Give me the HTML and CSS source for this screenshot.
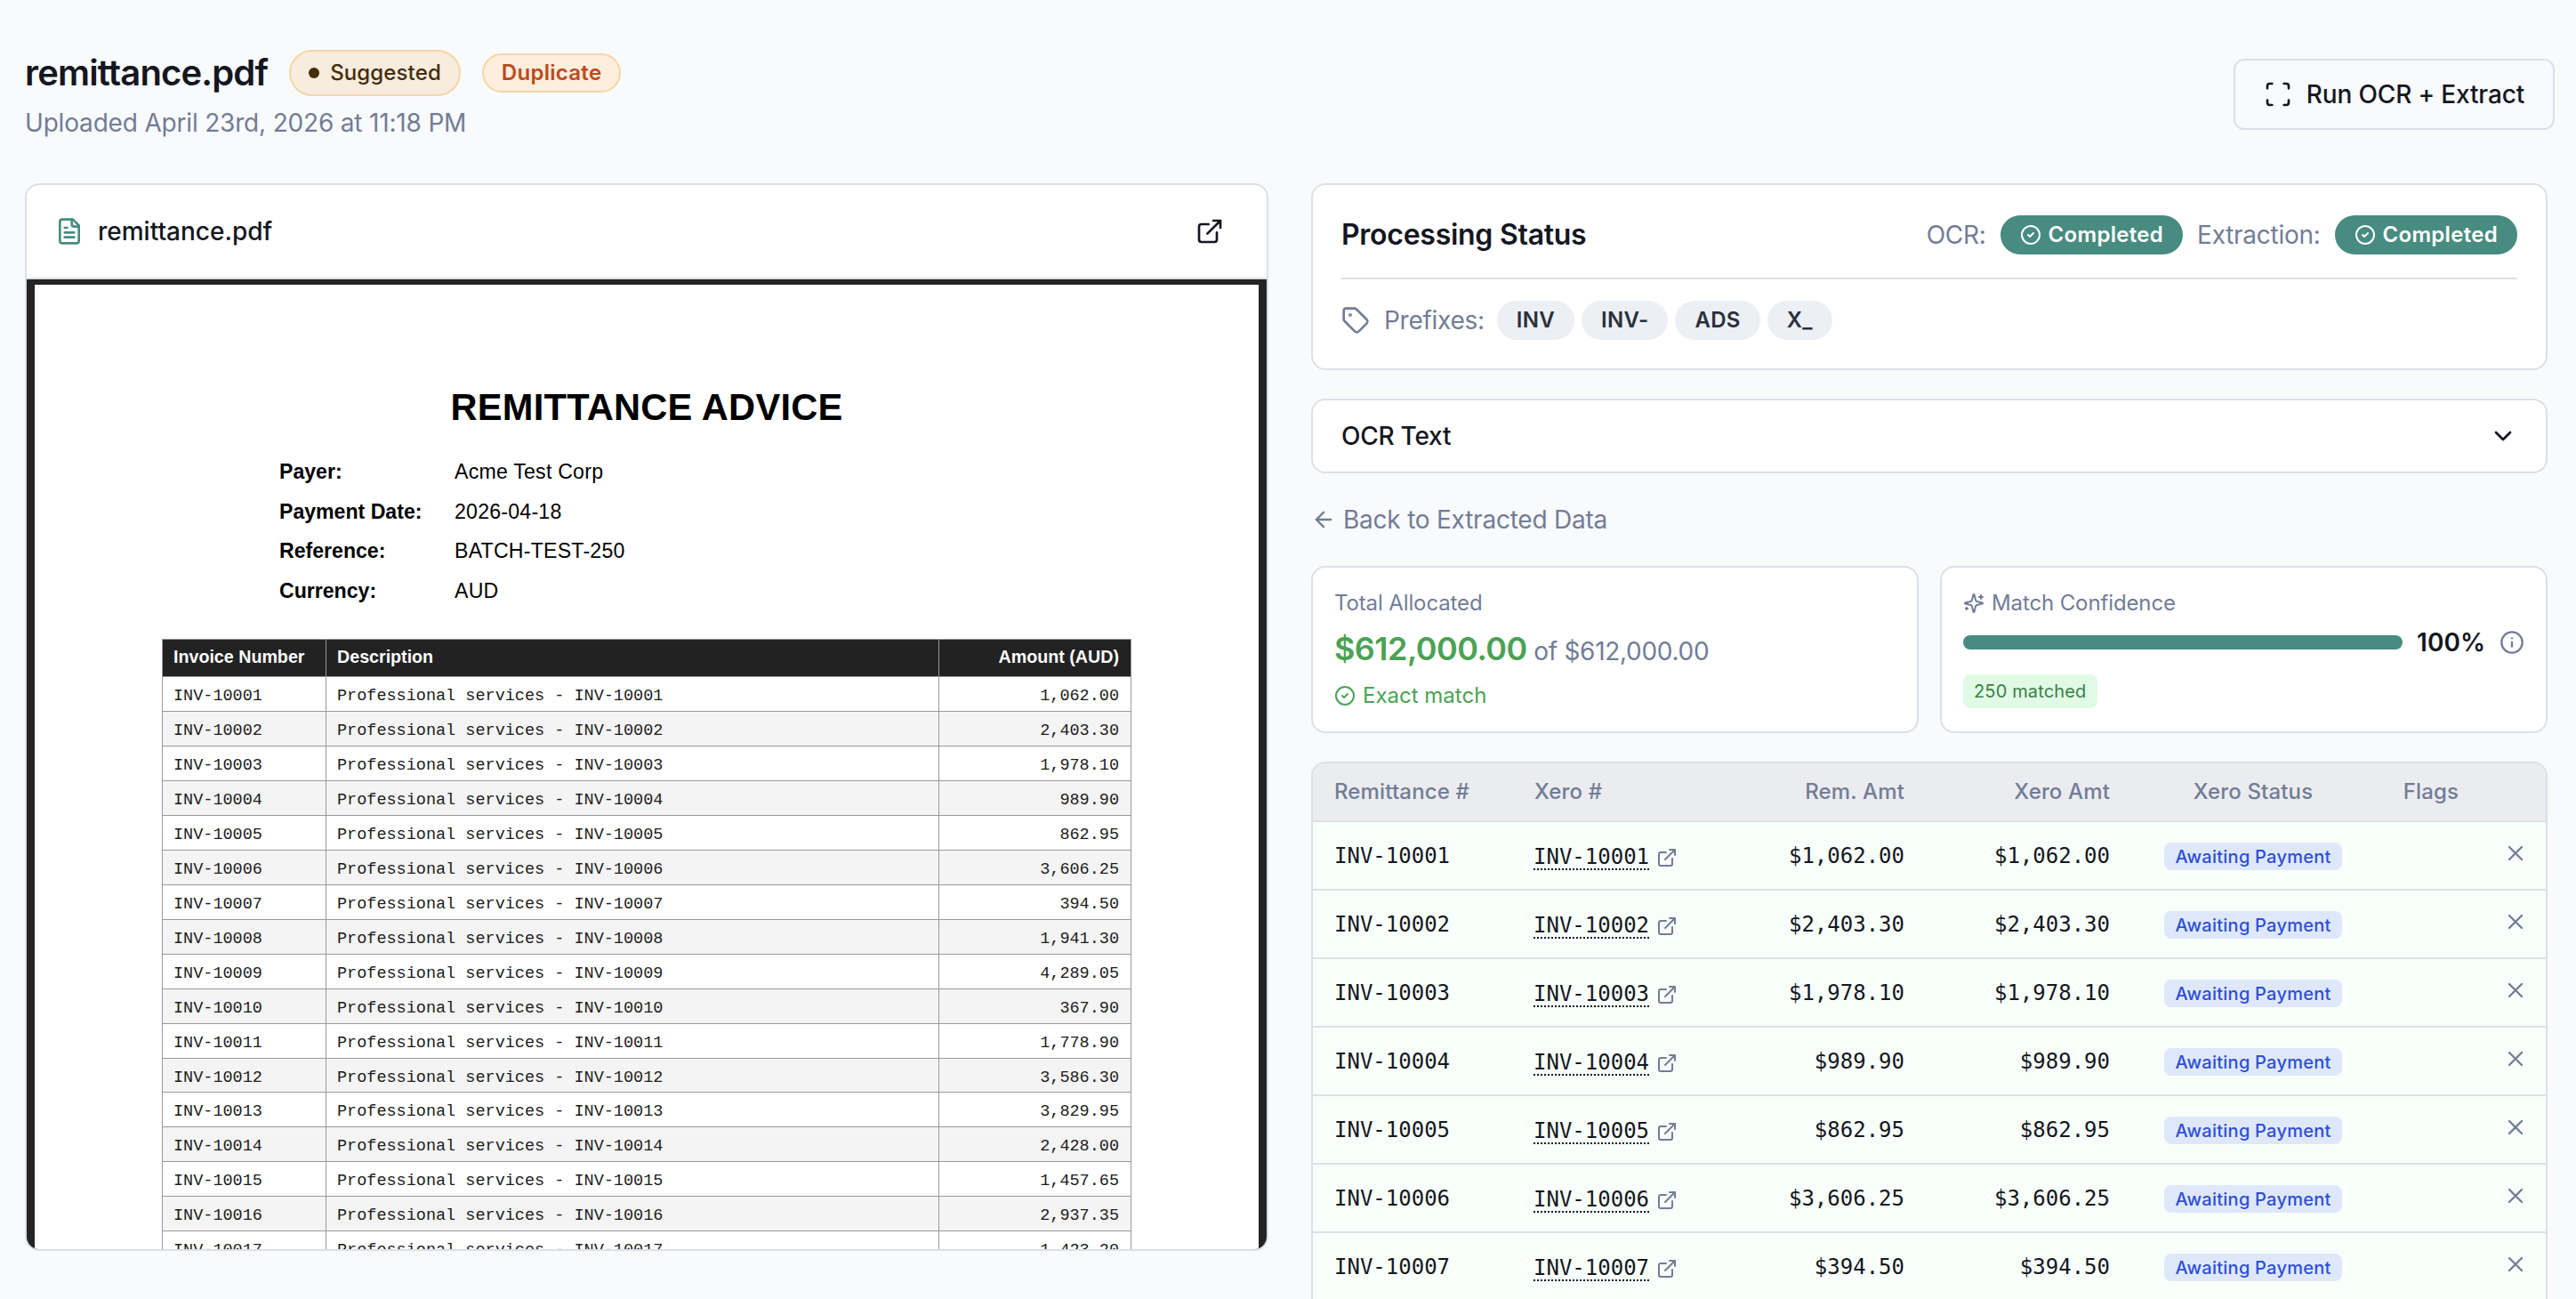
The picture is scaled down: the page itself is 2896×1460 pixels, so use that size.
FILE: index.html
```html
<!DOCTYPE html>
<html lang="en">

<head>
    <meta charset="UTF-8">
    <meta name="viewport" content="width=device-width, initial-scale=1.0">
    <title>remittance.pdf</title>
    <link rel="stylesheet" href="styles.css">
</head>

<body>
    <!--Icons-->
    <svg class="sprite">
        <symbol id="file" viewBox="0 0 24 24">
            <path d="M15 2H6a2 2 0 0 0-2 2v16a2 2 0 0 0 2 2h12a2 2 0 0 0 2-2V7Z" />
            <path d="M14 2v4a2 2 0 0 0 2 2h4M10 9H8M16 13H8M16 17H8" />
        </symbol>
        <symbol id="external" viewBox="0 0 24 24">
            <path d="M15 3h6v6M10 14 21 3M18 13v6a2 2 0 0 1-2 2H5a2 2 0 0 1-2-2V8a2 2 0 0 1 2-2h6" />
        </symbol>
        <symbol id="scan" viewBox="0 0 24 24">
            <path d="M3 7V5a2 2 0 0 1 2-2h2M17 3h2a2 2 0 0 1 2 2v2M21 17v2a2 2 0 0 1-2 2h-2M7 21H5a2 2 0 0 1-2-2v-2" />
        </symbol>
        <symbol id="check" viewBox="0 0 24 24">
            <circle cx="12" cy="12" r="10" />
            <path d="m9 12 2 2 4-4" />
        </symbol>
        <symbol id="tag" viewBox="0 0 24 24">
            <path d="M12.586 2.586A2 2 0 0 0 11.172 2H4a2 2 0 0 0-2 2v7.172a2 2 0 0 0 .586 1.414l8.704 8.704a2.426 2.426 0 0 0 3.42 0l6.58-6.58a2.426 2.426 0 0 0 0-3.42z" />
            <circle cx="7.5" cy="7.5" r=".5" fill="currentColor" />
        </symbol>
        <symbol id="chevron" viewBox="0 0 24 24">
            <path d="m6 9 6 6 6-6" />
        </symbol>
        <symbol id="arrow" viewBox="0 0 24 24">
            <path d="m12 19-7-7 7-7M19 12H5" />
        </symbol>
        <symbol id="sparkles" viewBox="0 0 24 24">
            <path d="M9.937 15.5A2 2 0 0 0 8.5 14.063l-6.135-1.582a.5.5 0 0 1 0-.962L8.5 9.936A2 2 0 0 0 9.937 8.5l1.582-6.135a.5.5 0 0 1 .963 0L14.063 8.5A2 2 0 0 0 15.5 9.937l6.135 1.581a.5.5 0 0 1 0 .964L15.5 14.063a2 2 0 0 0-1.437 1.437l-1.582 6.135a.5.5 0 0 1-.963 0z" />
            <path d="M20 3v4M22 5h-4M4 17v2M5 18H3" />
        </symbol>
        <symbol id="info" viewBox="0 0 24 24">
            <circle cx="12" cy="12" r="10" />
            <path d="M12 16v-4M12 8h.01" />
        </symbol>
        <symbol id="close" viewBox="0 0 24 24">
            <path d="M18 6 6 18M6 6l12 12" />
        </symbol>
    </svg>

    <!--Header-->
    <header class="header">
        <div>
            <div class="titleRow">
                <h1>remittance.pdf</h1>
                <span class="badge suggested"><i class="dot"></i>Suggested</span>
                <span class="badge duplicate">Duplicate</span>
            </div>
            <p class="uploaded">Uploaded April 23rd, 2026 at 11:18 PM</p>
        </div>
        <button class="runButton"><svg class="icon"><use href="#scan" /></svg>Run OCR + Extract</button>
    </header>

    <!--Main Body-->
    <main class="main">
        <section class="card viewer">
            <div class="viewerHead">
                <svg class="icon teal"><use href="#file" /></svg>
                <span class="viewerName">remittance.pdf</span>
                <svg class="icon"><use href="#external" /></svg>
            </div>
            <div class="viewerBody">
                <div class="page">
                    <h2>REMITTANCE ADVICE</h2>
                    <dl class="details">
                        <dt>Payer:</dt>
                        <dd>Acme Test Corp</dd>
                        <dt>Payment Date:</dt>
                        <dd>2026-04-18</dd>
                        <dt>Reference:</dt>
                        <dd>BATCH-TEST-250</dd>
                        <dt>Currency:</dt>
                        <dd>AUD</dd>
                    </dl>
                    <div class="lines" id="lines">
                        <div class="line lineHead">
                            <span>Invoice Number</span>
                            <span>Description</span>
                            <span>Amount (AUD)</span>
                        </div>
                    </div>
                </div>
            </div>
        </section>

        <section class="side">
            <div class="card status">
                <div class="statusTop">
                    <h3>Processing Status</h3>
                    <span class="label">OCR:</span>
                    <span class="pill done"><svg class="icon small"><use href="#check" /></svg>Completed</span>
                    <span class="label second">Extraction:</span>
                    <span class="pill done"><svg class="icon small"><use href="#check" /></svg>Completed</span>
                </div>
                <div class="prefixes">
                    <svg class="icon"><use href="#tag" /></svg>
                    <span class="label">Prefixes:</span>
                    <span class="pill">INV</span>
                    <span class="pill">INV-</span>
                    <span class="pill">ADS</span>
                    <span class="pill">X_</span>
                </div>
            </div>

            <div class="card ocrText">OCR Text<svg class="icon"><use href="#chevron" /></svg></div>

            <a class="back"><svg class="icon mid"><use href="#arrow" /></svg>Back to Extracted Data</a>

            <div class="stats">
                <div class="card stat">
                    <div class="statLabel">Total Allocated</div>
                    <div class="amount"><strong>$612,000.00</strong> of $612,000.00</div>
                    <div class="exact"><svg class="icon small"><use href="#check" /></svg>Exact match</div>
                </div>
                <div class="card stat">
                    <div class="statLabel"><svg class="icon small"><use href="#sparkles" /></svg>Match Confidence</div>
                    <div class="confidence">
                        <div class="bar"></div>
                        <strong>100%</strong>
                        <svg class="icon mid"><use href="#info" /></svg>
                    </div>
                    <span class="matched">250 matched</span>
                </div>
            </div>

            <div class="card tableCard">
                <table>
                    <colgroup>
                        <col class="colRem"><col class="colXero"><col class="colAmt"><col class="colXeroAmt">
                        <col class="colStatus"><col class="colFlags"><col>
                    </colgroup>
                    <thead>
                        <tr>
                            <th>Remittance #</th>
                            <th>Xero #</th>
                            <th class="right">Rem. Amt</th>
                            <th class="right">Xero Amt</th>
                            <th class="center">Xero Status</th>
                            <th class="center">Flags</th>
                            <th></th>
                        </tr>
                    </thead>
                    <tbody id="rows"></tbody>
                </table>
            </div>
        </section>
    </main>

    <!--Script-->
    <script>
        const amounts = ['1,062.00', '2,403.30', '1,978.10', '989.90', '862.95', '3,606.25', '394.50', '1,941.30',
            '4,289.05', '367.90', '1,778.90', '3,586.30', '3,829.95', '2,428.00', '1,457.65', '2,937.35', '1,423.20'];
        const lines = document.getElementById('lines');
        const rows = document.getElementById('rows');

        amounts.forEach((amount, i) => {
            const number = 'INV-' + (10001 + i);
            lines.insertAdjacentHTML('beforeend', `<div class="line">
                <span>${number}</span><span>Professional services - ${number}</span><span>${amount}</span>
            </div>`);
        });

        amounts.slice(0, 7).forEach((amount, i) => {
            const number = 'INV-' + (10001 + i);
            rows.insertAdjacentHTML('beforeend', `<tr>
                <td>${number}</td>
                <td><a class="xero"><span>${number}</span><svg class="icon small"><use href="#external" /></svg></a></td>
                <td class="right">$${amount}</td>
                <td class="right">$${amount}</td>
                <td class="center"><span class="awaiting">Awaiting Payment</span></td>
                <td></td>
                <td class="remove"><svg class="icon mid"><use href="#close" /></svg></td>
            </tr>`);
        });
    </script>
</body>

</html>
```

FILE: styles.css
```css
* {
    box-sizing: border-box;
}

body {
    margin: 0;
    height: 1460px;
    overflow: hidden;
    background-color: #f9fafc;
    color: #14171f;
    font-family: Inter, "Liberation Sans", sans-serif;
    font-size: 28px;
    line-height: 40px;
}

h1, h2, h3, p, dl, dd {
    margin: 0;
}

.sprite {
    display: none;
}

.icon {
    width: 32px;
    height: 32px;
    flex-shrink: 0;
    fill: none;
    stroke: currentColor;
    stroke-width: 2;
    stroke-linecap: round;
    stroke-linejoin: round;
}

.icon.mid {
    width: 28px;
    height: 28px;
}

.icon.small {
    width: 24px;
    height: 24px;
}

.teal {
    color: #488b80;
}

/* header */

.header {
    display: flex;
    justify-content: space-between;
    align-items: flex-start;
    padding: 56px 24px 48px 28px;
}

.titleRow {
    display: flex;
    align-items: center;
    height: 52px;
}

h1 {
    margin-right: 24px;
    font-size: 40px;
    font-weight: 600;
    letter-spacing: -0.84px;
}

.badge {
    display: flex;
    align-items: center;
    border: 2px solid #f6d5a6;
    border-radius: 26px;
    font-size: 24px;
    font-weight: 500;
}

.suggested {
    gap: 12px;
    height: 52px;
    margin-right: 24px;
    padding: 0 20px;
    background-color: #f7ecde;
    color: #452c0c;
    letter-spacing: 0.12px;
}

.dot {
    width: 12px;
    height: 12px;
    border-radius: 50%;
    background-color: #452c0c;
}

.duplicate {
    height: 44px;
    padding: 0 20px;
    background-color: #feeedb;
    color: #bb4a20;
    font-weight: 600;
    letter-spacing: 0.28px;
}

.uploaded {
    margin-top: 10px;
    color: #717d96;
    letter-spacing: -0.18px;
}

.runButton {
    display: flex;
    align-items: center;
    gap: 16px;
    height: 80px;
    margin-top: 10px;
    padding: 0 32px;
    border: 2px solid #dbe0e7;
    border-radius: 12px;
    background-color: #f9fafc;
    color: inherit;
    font: inherit;
    font-weight: 500;
    letter-spacing: -0.16px;
}

/* layout */

.main {
    display: grid;
    grid-template-columns: 1398px 1390px;
    gap: 48px;
    align-items: start;
    padding-left: 28px;
}

.card {
    border: 2px solid #dbe0e7;
    border-radius: 16px;
    background-color: #fff;
}

/* pdf viewer */

.viewer {
    height: 1200px;
    overflow: hidden;
}

.viewerHead {
    display: flex;
    align-items: center;
    height: 106px;
    padding: 0 48px 0 32px;
    border-bottom: 2px solid #dbe0e7;
}

.viewerName {
    flex: 1;
    margin-left: 16px;
    font-weight: 500;
}

.viewerBody {
    padding: 6px 9px 0;
    background-color: #242424;
}

.page {
    height: 1100px;
    padding: 112px 143px 0;
    background-color: #fff;
    color: #000;
    font-family: "Liberation Sans", Arial, sans-serif;
}

h2 {
    font-size: 41.6px;
    line-height: 52px;
    text-align: center;
    letter-spacing: 0.25px;
}

.details {
    display: grid;
    grid-template-columns: 197px 1fr;
    margin: 24px 0 32px 132px;
    font-size: 23.1px;
    line-height: 44.6px;
}

dt {
    font-weight: bold;
}

dd {
    letter-spacing: 0.24px;
}

.lines {
    border: 1px solid #999;
    border-bottom: none;
}

.line {
    display: grid;
    grid-template-columns: 184px 689px 1fr;
    height: 38.93px;
    border-bottom: 1px solid #999;
    color: #1c1c1c;
    font-family: "Liberation Mono", "Courier New", monospace;
    font-size: 18.5px;
    line-height: 43px;
}

.line:nth-child(odd) {
    background-color: #f4f4f4;
}

.line span {
    height: 38px;
    padding: 0 13px 0 12px;
    border-right: 1px solid #999;
    white-space: nowrap;
}

.line span:last-child {
    border-right: none;
    text-align: right;
}

.line.lineHead {
    height: 42px;
    background-color: #222;
    color: #fff;
    font-family: inherit;
    font-size: 19.66px;
    font-weight: bold;
    line-height: 39px;
}

.line.lineHead span {
    height: 41px;
}

/* processing status */

.status {
    height: 210px;
    padding: 32px;
}

.statusTop {
    display: flex;
    align-items: center;
    height: 74px;
    padding-bottom: 24px;
    border-bottom: 2px solid #dbe0e7;
}

h3 {
    flex: 1;
    font-size: 32px;
    font-weight: 600;
    letter-spacing: -0.27px;
}

.label {
    margin-right: 16px;
    color: #717d96;
    letter-spacing: -0.27px;
}

.label.second {
    margin-left: 16px;
}

.pill {
    display: flex;
    align-items: center;
    height: 44px;
    padding: 0 22px;
    border-radius: 22px;
    background-color: #eceff3;
    color: #2a303d;
    font-size: 24px;
    font-weight: 600;
    letter-spacing: 0.3px;
}

.done {
    gap: 8px;
    background-color: #488b80;
    color: #fff;
}

.prefixes {
    display: flex;
    align-items: center;
    gap: 8px;
    padding-top: 24px;
    color: #717d96;
}

.prefixes .label {
    margin: 0 6px 0 8px;
}

.ocrText {
    display: flex;
    justify-content: space-between;
    align-items: center;
    height: 84px;
    margin-top: 32px;
    padding: 0 32px;
    font-weight: 500;
    letter-spacing: -0.25px;
}

.back {
    display: flex;
    align-items: center;
    gap: 8px;
    margin: 32px 0;
    color: #717d96;
    letter-spacing: -0.23px;
}

/* stats */

.stats {
    display: grid;
    grid-template-columns: 1fr 1fr;
    gap: 24px;
}

.stat {
    height: 188px;
    padding: 24px;
}

.statLabel {
    display: flex;
    align-items: center;
    gap: 8px;
    height: 32px;
    color: #717d96;
    font-size: 24px;
    letter-spacing: -0.12px;
}

.amount {
    height: 56px;
    margin: 8px 0;
    color: #717d96;
    line-height: 55px;
    letter-spacing: -0.3px;
}

.amount strong {
    color: #4ba254;
    font-size: 36px;
    font-weight: 600;
    letter-spacing: -0.55px;
}

.exact {
    display: flex;
    align-items: center;
    gap: 8px;
    height: 32px;
    color: #4ba254;
    font-size: 24px;
}

.confidence {
    display: flex;
    align-items: center;
    gap: 16px;
    height: 40px;
    margin: 8px 0 16px;
}

.confidence strong {
    font-weight: 600;
}

.confidence .icon {
    color: #717d96;
}

.bar {
    flex: 1;
    height: 16px;
    border-radius: 8px;
    background-color: #488b80;
}

.matched {
    display: inline-block;
    height: 38px;
    padding: 0 12px;
    border-radius: 8px;
    background-color: #e1fae6;
    color: #3b8045;
    font-size: 20px;
    line-height: 38px;
    letter-spacing: 0.15px;
    vertical-align: top;
}

/* invoice table */

.tableCard {
    margin-top: 32px;
    border-bottom: none;
    border-radius: 16px 16px 0 0;
    overflow: hidden;
}

table {
    width: 100%;
    table-layout: fixed;
    border-collapse: separate;
    border-spacing: 0;
}

.colRem {
    width: 225px;
}

.colXero {
    width: 240px;
}

.colAmt {
    width: 224px;
}

.colXeroAmt {
    width: 231px;
}

.colStatus {
    width: 274px;
}

.colFlags {
    width: 126px;
}

th {
    height: 66px;
    padding: 0 24px;
    border-bottom: 2px solid #dbe0e7;
    background-color: #ebecf0;
    color: #717d96;
    font-size: 24px;
    font-weight: 500;
    letter-spacing: 0.15px;
    text-align: left;
}

td {
    height: 77px;
    padding: 0 24px;
    border-bottom: 2px solid #dbe0e7;
    background-color: #f8fef9;
    font-family: "DejaVu Sans Mono", monospace;
    font-size: 24px;
}

th.right, td.right {
    text-align: right;
}

th.center, td.center {
    padding: 0;
    text-align: center;
}

.xero {
    display: flex;
    align-items: center;
    gap: 8px;
    margin-left: -1px;
    padding-top: 4px;
}

.xero span {
    border-bottom: 2px dotted #14171f;
    line-height: 26px;
}

.xero .icon {
    color: #717d96;
}

.awaiting {
    display: inline-block;
    height: 31px;
    padding: 0 12px;
    border-radius: 8px;
    background-color: #dfe8fb;
    color: #2d4fd6;
    font-family: Inter, sans-serif;
    font-size: 20px;
    font-weight: 500;
    line-height: 32px;
    letter-spacing: 0.25px;
    vertical-align: middle;
}

td.remove {
    padding: 0 0 6px 18px;
    color: #717d96;
    line-height: 0;
}
```
